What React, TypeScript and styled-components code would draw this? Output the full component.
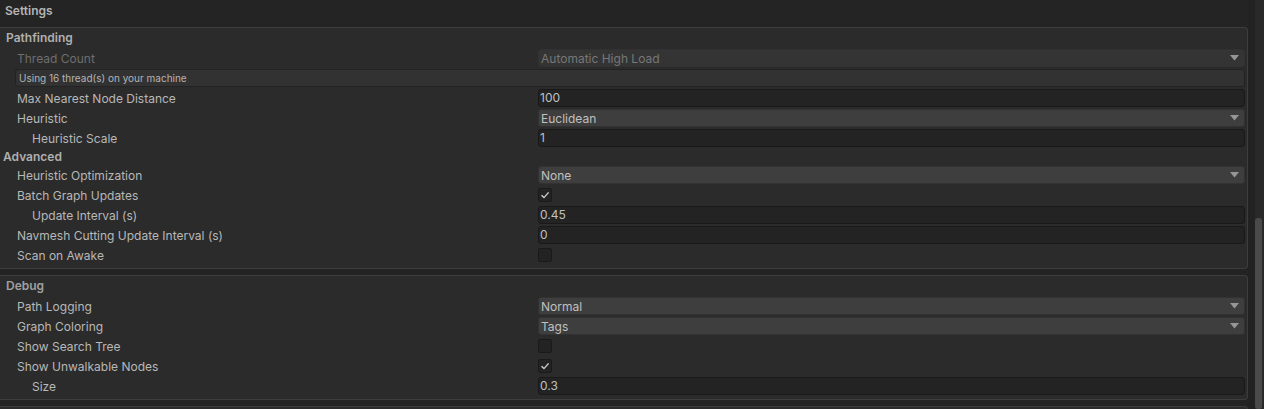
import React from 'react';
import styled, { createGlobalStyle } from 'styled-components';

const GlobalStyle = createGlobalStyle`
  html, body {
    margin: 0;
    padding: 0;
    background: #232323;
  }
  body {
    font-family: Inter, "Noto Sans", "Liberation Sans", sans-serif;
    font-size: 12px;
    color: #bdbdbd;
  }
`;

type Field =
  | { kind: 'dropdown'; value: string; disabled?: boolean }
  | { kind: 'text'; value: string }
  | { kind: 'check'; checked: boolean };

interface Prop {
  label: string;
  indent?: number;
  disabled?: boolean;
  field: Field;
}

const pathfindingTop: Prop[] = [
  { label: 'Thread Count', disabled: true, field: { kind: 'dropdown', value: 'Automatic High Load', disabled: true } },
];

const pathfindingRest: Prop[] = [
  { label: 'Max Nearest Node Distance', field: { kind: 'text', value: '100' } },
  { label: 'Heuristic', field: { kind: 'dropdown', value: 'Euclidean' } },
  { label: 'Heuristic Scale', indent: 1, field: { kind: 'text', value: '1' } },
];

const advanced: Prop[] = [
  { label: 'Heuristic Optimization', field: { kind: 'dropdown', value: 'None' } },
  { label: 'Batch Graph Updates', field: { kind: 'check', checked: true } },
  { label: 'Update Interval (s)', indent: 1, field: { kind: 'text', value: '0.45' } },
  { label: 'Navmesh Cutting Update Interval (s)', field: { kind: 'text', value: '0' } },
  { label: 'Scan on Awake', field: { kind: 'check', checked: false } },
];

const debug: Prop[] = [
  { label: 'Path Logging', field: { kind: 'dropdown', value: 'Normal' } },
  { label: 'Graph Coloring', field: { kind: 'dropdown', value: 'Tags' } },
  { label: 'Show Search Tree', field: { kind: 'check', checked: false } },
  { label: 'Show Unwalkable Nodes', field: { kind: 'check', checked: true } },
  { label: 'Size', indent: 1, field: { kind: 'text', value: '0.3' } },
];

const Check = () => (
  <svg width="10" height="10" viewBox="0 0 10 10">
    <polyline points="1.5,5.2 4,7.6 8.6,2.4" fill="none" stroke="#cfcfcf" strokeWidth="1.4" />
  </svg>
);

const Arrow = () => (
  <svg width="9" height="6" viewBox="0 0 9 6">
    <polygon points="0,0 9,0 4.5,5.5" fill="#969696" />
  </svg>
);

const PropertyRow = ({ p }: { p: Prop }) => (
  <Row>
    <Label $indent={p.indent || 0} $disabled={p.disabled}>
      {p.label}
    </Label>
    <Control>
      {p.field.kind === 'dropdown' && (
        <Dropdown $disabled={p.field.disabled}>
          <span>{p.field.value}</span>
          <Arrow />
        </Dropdown>
      )}
      {p.field.kind === 'text' && <TextField>{p.field.value}</TextField>}
      {p.field.kind === 'check' && <Checkbox>{p.field.checked && <Check />}</Checkbox>}
    </Control>
  </Row>
);

export default function App() {
  return (
    <Page>
      <GlobalStyle />
      <Content>
        <TopBar>Settings</TopBar>
        <Panel>
          <SectionTitle>Pathfinding</SectionTitle>
          {pathfindingTop.map((p) => (
            <PropertyRow key={p.label} p={p} />
          ))}
          <HelpBox>Using 16 thread(s) on your machine</HelpBox>
          {pathfindingRest.map((p) => (
            <PropertyRow key={p.label} p={p} />
          ))}
          <SubTitle>Advanced</SubTitle>
          {advanced.map((p) => (
            <PropertyRow key={p.label} p={p} />
          ))}
        </Panel>
        <Panel $gap>
          <SectionTitle $dim>Debug</SectionTitle>
          {debug.map((p) => (
            <PropertyRow key={p.label} p={p} />
          ))}
        </Panel>
        <Panel $gap $stub />
      </Content>
      <ScrollTrack>
        <Thumb />
      </ScrollTrack>
    </Page>
  );
}

const Page = styled.div`
  display: flex;
  width: 1264px;
  height: 409px;
  overflow: hidden;
  background: #232323;
`;

const Content = styled.div`
  width: 1248px;
  display: flex;
  flex-direction: column;
`;

const TopBar = styled.div`
  flex-shrink: 0;
  height: 27px;
  box-sizing: border-box;
  padding: 3px 0 0 5px;
  font-weight: 600;
  color: #b4b4b4;
  background: #242424;
`;

const Panel = styled.div<{ $gap?: boolean; $stub?: boolean }>`
  flex-shrink: 0;
  display: flex;
  flex-direction: column;
  margin-top: ${(p) => (p.$gap ? '6px' : '0')};
  padding-bottom: ${(p) => (p.$stub ? '0' : '3px')};
  background: #2b2b2b;
  border: 1px solid #3d3d3d;
  border-left: none;
  border-radius: 0 4px 4px 0;
  min-height: ${(p) => (p.$stub ? '20px' : 'auto')};
`;

const SectionTitle = styled.div<{ $dim?: boolean }>`
  height: 20px;
  line-height: 20px;
  padding-left: 6px;
  font-weight: 600;
  color: ${(p) => (p.$dim ? '#a0a0a0' : '#b0b0b0')};
`;

const SubTitle = styled.div`
  height: 17px;
  line-height: 17px;
  padding-left: 3px;
  font-weight: 600;
  color: #b0b0b0;
`;

const Row = styled.div`
  display: flex;
  align-items: center;
  height: 20px;
`;

const Label = styled.div<{ $indent: number; $disabled?: boolean }>`
  width: 538px;
  flex-shrink: 0;
  box-sizing: border-box;
  padding-left: ${(p) => 17 + p.$indent * 15}px;
  color: ${(p) => (p.$disabled ? '#6e6e6e' : '#b8b8b8')};
  white-space: nowrap;
`;

const Control = styled.div`
  flex: 1;
  margin-right: 2px;
  display: flex;
  align-items: center;
`;

const Dropdown = styled.div<{ $disabled?: boolean }>`
  flex: 1;
  height: 18px;
  box-sizing: border-box;
  display: flex;
  align-items: center;
  justify-content: space-between;
  padding: 0 5px 0 2px;
  border-radius: 3px;
  background: ${(p) => (p.$disabled ? '#343434' : '#3e3e3e')};
  border: 1px solid ${(p) => (p.$disabled ? '#313131' : '#323232')};
  color: ${(p) => (p.$disabled ? '#777777' : '#c0c0c0')};
`;

const TextField = styled.div`
  flex: 1;
  height: 18px;
  box-sizing: border-box;
  line-height: 16px;
  padding-left: 1px;
  border-radius: 3px;
  background: #232323;
  border: 1px solid #191919;
  color: #c0c0c0;
`;

const Checkbox = styled.div`
  width: 14px;
  height: 14px;
  box-sizing: border-box;
  display: flex;
  align-items: center;
  justify-content: center;
  border-radius: 2px;
  background: #232323;
  border: 1px solid #1a1a1a;
`;

const HelpBox = styled.div`
  height: 18px;
  margin: 1px 2px 1px 15px;
  box-sizing: border-box;
  line-height: 16px;
  padding-left: 3px;
  font-size: 10px;
  border-radius: 3px;
  background: #323232;
  border: 1px solid #232323;
  color: #b4b4b4;
`;

const ScrollTrack = styled.div`
  width: 16px;
  display: flex;
  flex-direction: column;
  align-items: flex-end;
  padding-right: 2px;
  box-sizing: border-box;
  background: linear-gradient(to right, #222222 0 7px, #292929 7px);
`;

const Thumb = styled.div`
  margin-top: 218px;
  width: 7px;
  height: 220px;
  border-radius: 3px;
  background: #4a4a4a;
`;
